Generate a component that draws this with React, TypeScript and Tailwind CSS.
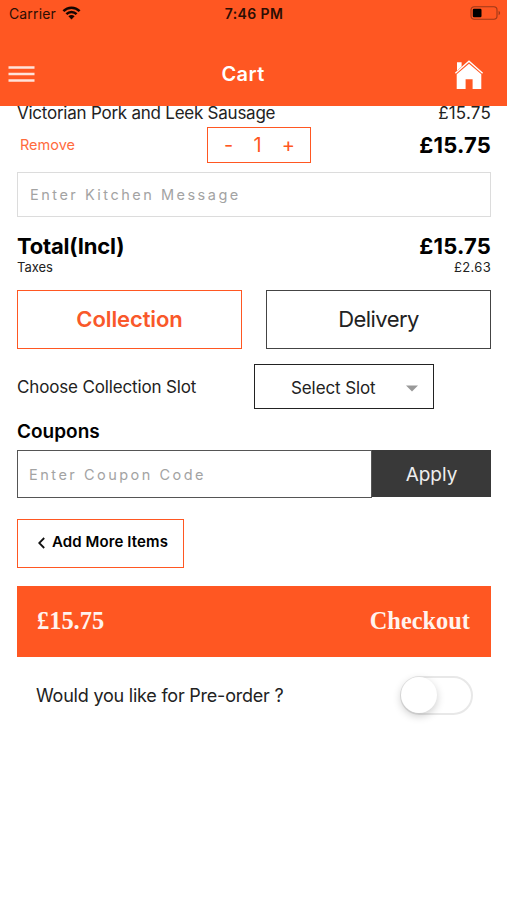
import { useState } from "react";

function StatusBar() {
  return (
    <div className="h-[26px] flex items-center justify-between pl-[9px] pr-[6px] text-[#2b0e04]">
      <div className="w-[120px] flex items-center gap-[6px]">
        <span className="text-[14px] tracking-[0.01em]">Carrier</span>
        <svg width="19" height="14" viewBox="0 0 18 14" fill="none" stroke="#160602" strokeWidth="2.5">
          <path d="M0.9 5.1C5.4 0.5 12.6 0.5 17.1 5.1" />
          <path d="M3.9 8.2C6.7 5.3 11.3 5.3 14.1 8.2" />
          <path d="M9 13.4L5.9 10.2C7.6 8.5 10.4 8.5 12.1 10.2Z" fill="#160602" stroke="none" />
        </svg>
      </div>
      <span className="pr-[2px] text-[14px] font-semibold tracking-[0.03em]">7:46 PM</span>
      <div className="w-[120px] flex justify-end">
        <svg width="31" height="14" viewBox="0 0 31 14" fill="none">
          <rect x="1" y="0.8" width="26" height="12.4" rx="3.2" stroke="#9d3818" strokeWidth="1.1" />
          <rect x="2.8" y="2.7" width="8.7" height="8.6" rx="1.2" fill="#000" />
          <path d="M28.6 4.8C30.6 5.6 30.6 8.4 28.6 9.2Z" fill="#9d3818" />
        </svg>
      </div>
    </div>
  );
}

function Header() {
  return (
    <header className="relative z-10 h-[106px] bg-[#ff5722]">
      <StatusBar />
      <div className="h-20 flex items-center justify-between pl-2 pr-[23px] text-white">
        <button className="w-[42px] pt-4">
          <svg width="27" height="16" viewBox="0 0 27 16" stroke="#ffe3da" strokeWidth="2.4">
            <path d="M0.5 1.5H26.5M0.5 8H26.5M0.5 14.5H26.5" />
          </svg>
        </button>
        <h1 className="pt-4 pr-[6px] text-[20px] font-semibold tracking-[0.02em]">Cart</h1>
        <button className="w-[42px] flex justify-end pt-[17px]">
          <svg width="30" height="30" viewBox="0 0 30 30" fill="#fff">
            <path d="M3 2.2H7.6V6.5L3 10.7Z" />
            <path d="M1.4 13.2L15 1.2L28.6 13.2" fill="none" stroke="#fff" strokeWidth="1.4" />
            <path d="M2.7 14.3L15 3.8L27.3 14.3V29H18.6V19.3H11.6V29H2.7Z" />
          </svg>
        </button>
      </div>
    </header>
  );
}

export default function App() {
  const [qty, setQty] = useState(1);
  const [preOrder, setPreOrder] = useState(false);

  return (
    <div className="w-[507px] h-[900px] overflow-hidden bg-white font-['Inter',sans-serif] text-[#222]">
      <Header />

      <main className="pl-[17px] pr-4">
        <div className="h-[14px] flex items-center justify-between text-[17px] leading-[14px]">
          <span className="tracking-[-0.24px]">Victorian Pork and Leek Sausage</span>
          <span className="tracking-[0.2px]">£15.75</span>
        </div>

        <div className="mt-[7px] h-9 flex items-center justify-between">
          <button className="w-[190px] pl-[3px] text-left text-[14.5px] text-[#ff6b3d]">Remove</button>
          <div className="w-[104px] h-full pl-4 pr-[15px] flex items-center justify-between border border-[#ff5722] text-[20px] text-[#ff5722]">
            <button onClick={() => setQty(Math.max(1, qty - 1))}>-</button>
            <span>{qty}</span>
            <button onClick={() => setQty(qty + 1)}>+</button>
          </div>
          <span className="w-[180px] text-right text-[22px] font-bold tracking-[0.2px] text-black">£15.75</span>
        </div>

        <input
          className="mt-[9px] block w-full h-[45px] px-3 border border-[#dcdcdc] text-[14.5px] tracking-[2.5px] placeholder:text-[#a3a3a3]"
          placeholder="Enter Kitchen Message"
        />

        <div className="mt-[17px] h-6 flex items-center justify-between text-[22px] font-bold text-black">
          <span className="tracking-[-0.2px]">Total(Incl)</span>
          <span className="tracking-[0.2px]">£15.75</span>
        </div>
        <div className="mt-px h-[18px] flex items-center justify-between text-[13px]">
          <span>Taxes</span>
          <span className="tracking-[0.3px]">£2.63</span>
        </div>

        <div className="mt-[13px] flex justify-between">
          <button className="w-[225px] h-[59px] border border-[#ff5722] text-[22px] font-semibold tracking-[-0.1px] text-[#f9582a]">
            Collection
          </button>
          <button className="w-[225px] h-[59px] border border-[#444] text-[22px] tracking-[-0.55px]">
            Delivery
          </button>
        </div>

        <div className="mt-[15px] flex items-center">
          <span className="w-[237px] pt-[2px] text-[17px] tracking-[-0.15px]">Choose Collection Slot</span>
          <button className="w-[180px] h-[45px] pl-9 pr-[15px] pt-[4px] flex items-center justify-between border border-[#222] text-[17px] tracking-[-0.1px]">
            Select Slot
            <svg width="12" height="7" viewBox="0 0 12 7" fill="#999">
              <path d="M0 0.5H12L6 6.5Z" />
            </svg>
          </button>
        </div>

        <h2 className="mt-[12px] h-[21px] leading-[21px] text-[19px] font-semibold text-black">Coupons</h2>
        <div className="mt-[8px] flex">
          <input
            className="w-[355px] h-[48px] px-[11px] border border-[#555] text-[14.5px] tracking-[2.5px] placeholder:text-[#a3a3a3]"
            placeholder="Enter Coupon Code"
          />
          <button className="w-[119px] h-[47px] pt-[3px] bg-[#393939] text-[19px] text-[#eee]">Apply</button>
        </div>

        <button className="mt-[21px] w-[167px] h-[49px] pl-[20px] pb-[2px] flex items-center gap-[7px] border border-[#ff5722] text-[15px] font-semibold tracking-[0.1px] text-black">
          <svg width="7" height="12" viewBox="0 0 7 12" fill="none" stroke="#111" strokeWidth="1.8">
            <path d="M6.2 1L1.2 6L6.2 11" />
          </svg>
          Add More Items
        </button>

        <button className="mt-[18px] w-full h-[71px] pl-[20px] pr-[21px] flex items-center justify-between bg-[#ff5722] font-['Liberation_Serif',serif] text-[24.4px] font-bold text-[#fff3ee]">
          <span>£15.75</span>
          <span>Checkout</span>
        </button>

        <div className="mt-[18px] h-10 flex items-center justify-between pl-[19px] pr-[18px]">
          <span className="text-[18px] tracking-[-0.22px]">Would you like for Pre-order ?</span>
          <button
            role="switch"
            aria-checked={preOrder}
            onClick={() => setPreOrder(!preOrder)}
            className="w-[73px] h-[39px] flex items-center rounded-full border-2 border-[#e8e8e8]"
          >
            <span className="size-9 -ml-px rounded-full bg-white shadow-[0_3px_8px_rgba(0,0,0,0.2)]" />
          </button>
        </div>
      </main>
    </div>
  );
}
